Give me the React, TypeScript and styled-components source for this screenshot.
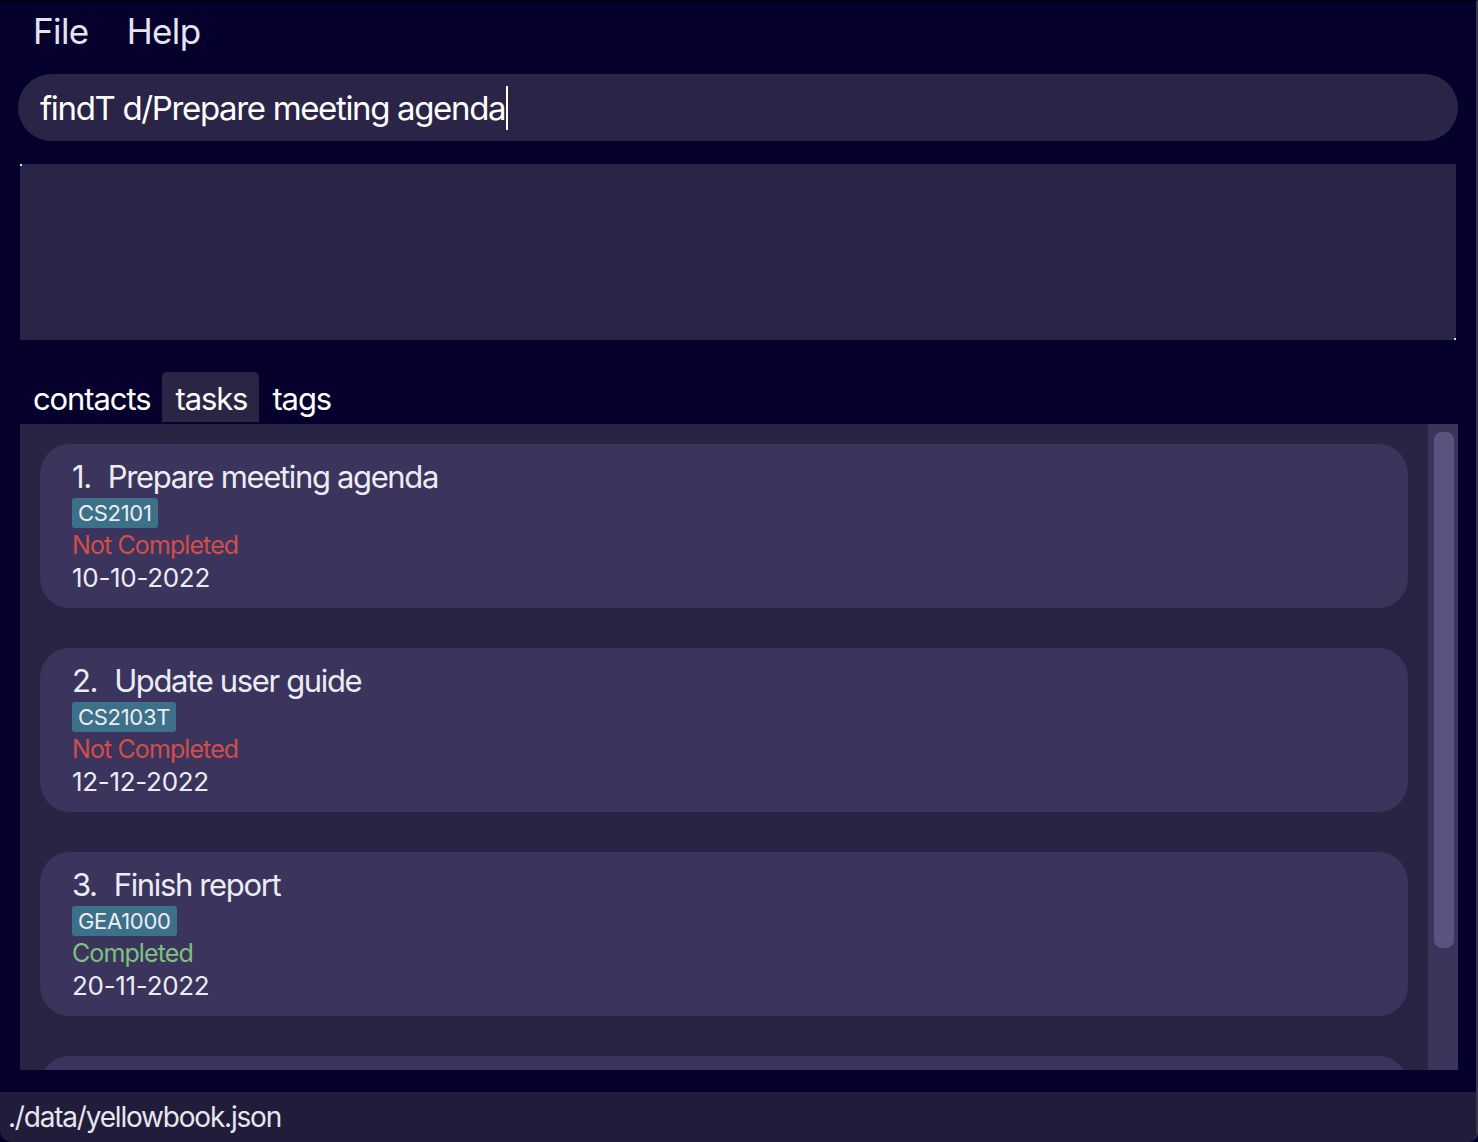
import React from "react";
import styled, { createGlobalStyle } from "styled-components";

const Global = createGlobalStyle`
  html, body { margin: 0; padding: 0; background: #05002c; }
  body { font-family: "Inter", "Open Sans", sans-serif; color: #ececf4; }
`;

const Window = styled.div`
  width: 1478px;
  height: 1142px;
  box-sizing: border-box;
  border-top: 1px solid #000;
  border-right: 2px solid #3a3a4a;
  border-bottom-right-radius: 10px;
  background: #05002c;
  display: flex;
  flex-direction: column;
  overflow: hidden;
`;

const MenuBar = styled.div`
  display: flex;
  gap: 38px;
  padding: 9px 0 0 33px;
  height: 72px;
  box-sizing: border-box;
  font-size: 35px;
  letter-spacing: -0.6px;
  color: #e4e4ee;
`;

const CommandBox = styled.div`
  margin: 1px 18px 0 18px;
  height: 67px;
  border-radius: 34px;
  background: #2a2546;
  display: flex;
  align-items: center;
  padding-left: 22px;
  font-size: 33px;
  letter-spacing: -1.35px;
  color: #ffffff;
`;

const Caret = styled.span`
  display: inline-block;
  width: 2px;
  height: 44px;
  background: #fff;
  vertical-align: middle;
  margin-left: 1px;
`;

const ResultBox = styled.div`
  position: relative;
  margin: 23px 20px 0 20px;
  height: 176px;
  background: #2a2546;
  &::before, &::after {
    content: "";
    position: absolute;
    width: 2px;
    height: 2px;
    background: #d8d8e0;
  }
  &::before { left: 0; top: 0; }
  &::after { right: 0; bottom: 0; }
`;

const TabRow = styled.div`
  display: flex;
  margin: 32px 0 0 20px;
  height: 50px;
  align-items: stretch;
`;

const Tab = styled.div<{ $active?: boolean }>`
  padding: 2px 12px 0 13px;
  display: flex;
  align-items: center;
  font-size: 31px;
  letter-spacing: -1.1px;
  color: #ffffff;
  background: ${(p) => (p.$active ? "#2a2545" : "transparent")};
  border-radius: 5px 5px 0 0;
`;

const ListPanel = styled.div`
  margin: 2px 18px 0 20px;
  height: 646px;
  flex-shrink: 0;
  background: #292444;
  display: flex;
  overflow: hidden;
`;

const CardList = styled.div`
  flex: 1;
  padding: 20px 20px 0 20px;
  display: flex;
  flex-direction: column;
  gap: 40px;
`;

const Card = styled.div`
  height: 164px;
  flex-shrink: 0;
  box-sizing: border-box;
  border-radius: 30px;
  background: #3b345c;
  padding: 12px 32px;
  display: flex;
  flex-direction: column;
`;

const Title = styled.div`
  font-size: 31px;
  letter-spacing: -1.35px;
  color: #ececf4;
  line-height: 42px;
  white-space: pre;
`;

const Num = styled.span`
  margin-right: 17px;
`;

const Tag = styled.span`
  align-self: flex-start;
  background: #3d7189;
  border-radius: 3px;
  padding: 0 6px;
  font-size: 22px;
  line-height: 30px;
  color: #ececf4;
  letter-spacing: -0.3px;
`;

const Status = styled.div<{ $done: boolean }>`
  font-size: 25px;
  line-height: 34px;
  letter-spacing: -0.9px;
  color: ${(p) => (p.$done ? "#7fc07f" : "#d24e4a")};
`;

const DateText = styled.div`
  font-size: 26px;
  line-height: 32px;
  letter-spacing: -0.3px;
  color: #ececf4;
`;

const Track = styled.div`
  width: 30px;
  background: #3b355c;
  padding: 8px 4px 0 6px;
  box-sizing: border-box;
`;

const Thumb = styled.div`
  height: 516px;
  border-radius: 8px;
  background: #5a537f;
`;

const StatusBar = styled.div`
  margin-top: 22px;
  height: 50px;
  flex-shrink: 0;
  background: #211c3a;
  border-bottom-left-radius: 12px;
  display: flex;
  align-items: center;
  padding-left: 8px;
  font-size: 28px;
  letter-spacing: -1.2px;
  color: #e6e6ee;
`;

const tasks = [
  { n: 1, title: "Prepare meeting agenda", tag: "CS2101", done: false, date: "10-10-2022" },
  { n: 2, title: "Update user guide", tag: "CS2103T", done: false, date: "12-12-2022" },
  { n: 3, title: "Finish report", tag: "GEA1000", done: true, date: "20-11-2022" },
];

export default function App() {
  return (
    <>
      <Global />
      <Window>
        <MenuBar>
          <span>File</span>
          <span>Help</span>
        </MenuBar>
        <CommandBox>
          findT d/Prepare meeting agenda<Caret />
        </CommandBox>
        <ResultBox />
        <TabRow>
          <Tab>contacts</Tab>
          <Tab $active>tasks</Tab>
          <Tab>tags</Tab>
        </TabRow>
        <ListPanel>
          <CardList>
            {tasks.map((t) => (
              <Card key={t.n}>
                <Title>
                  <Num>{`${t.n}.`}</Num>
                  {t.title}
                </Title>
                <Tag>{t.tag}</Tag>
                <Status $done={t.done}>{t.done ? "Completed" : "Not Completed"}</Status>
                <DateText>{t.date}</DateText>
              </Card>
            ))}
            <Card />
          </CardList>
          <Track>
            <Thumb />
          </Track>
        </ListPanel>
        <StatusBar>./data/yellowbook.json</StatusBar>
      </Window>
    </>
  );
}
